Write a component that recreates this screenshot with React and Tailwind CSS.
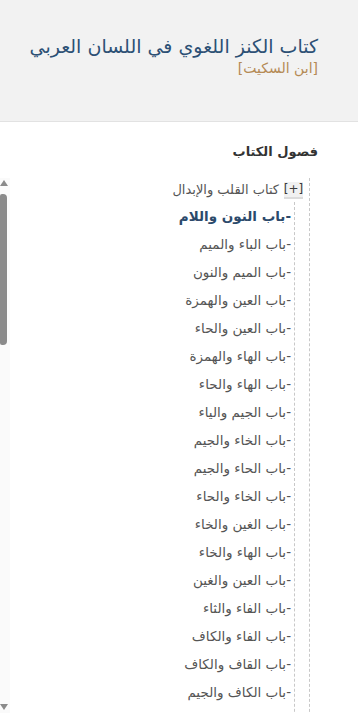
import React from 'react';

const chapters = [
  'باب النون واللام',
  'باب الباء والميم',
  'باب الميم والنون',
  'باب العين والهمزة',
  'باب العين والحاء',
  'باب الهاء والهمزة',
  'باب الهاء والحاء',
  'باب الجيم والياء',
  'باب الخاء والجيم',
  'باب الحاء والجيم',
  'باب الخاء والحاء',
  'باب الغين والخاء',
  'باب الهاء والخاء',
  'باب العين والغين',
  'باب الفاء والثاء',
  'باب الفاء والكاف',
  'باب القاف والكاف',
  'باب الكاف والجيم',
  'باب السين والشين',
  'باب الصاد والسين',
];

function Toggle() {
  return (
    <span className="inline-flex items-center justify-center w-[19px] h-[17px] bg-[#f1f1f1] border-b-2 border-[#dcdcdc] text-[12px] leading-none text-[#3b3b3b]" dir="ltr">
      [+]
    </span>
  );
}

// the scrollbar of the chapter list (drawn, the headless page hides native ones)
function ScrollBar() {
  return (
    <div className="w-[10px] shrink-0 bg-[#fafafa] flex flex-col items-start" dir="ltr">
      <div className="mt-[2px] h-0 w-0 border-x-[4px] border-b-[6px] border-x-transparent border-b-[#8a8a8a]" />
      <div className="mt-[8px] h-[151px] w-[7px] rounded-r-[4px] rounded-l-[2px] bg-[#8a8a8a]" />
      <div className="flex-1" />
      <div className="mb-[3px] h-0 w-0 border-x-[4px] border-t-[6px] border-x-transparent border-t-[#8a8a8a]" />
    </div>
  );
}

export default function App() {
  return (
    <div dir="rtl" className="min-h-screen bg-white font-['DejaVu_Sans',sans-serif]">
      <header className="h-[122px] bg-[#f2f2f2] border-b border-[#e2e2e2] pr-10 pt-[32px]">
        <h1 className="text-[19px] leading-[28px] text-[#2c5075]">كتاب الكنز اللغوي في اللسان العربي</h1>
        <p className="text-[14px] leading-[16px] text-[#b58a55]">[ابن السكيت]</p>
      </header>

      <section className="pr-10 pt-[20px]">
        <h2 className="text-[13px] leading-[20px] font-bold text-[#333]">فصول الكتاب</h2>

        <div className="mt-[16px] h-[535px] flex overflow-hidden">
          <div className="flex-1 pr-[8px]">
            <ul className="border-r border-dashed border-[#c8c8c8]">
              <li className="pr-[6px]">
                <div className="flex items-center gap-[5px] h-[22px] pt-[2px]">
                  <Toggle />
                  <span className="text-[13px] text-[#555]">كتاب القلب والإبدال</span>
                </div>
                <ul className="mr-[8px] mt-[2px] border-r border-dashed border-[#c8c8c8]">
                  {chapters.map((c, i) => (
                    <li
                      key={c}
                      className={`pr-[3px] text-[13.5px] leading-[28px] ${i === 0 ? 'font-bold text-[#2c4a6b]' : 'text-[#555]'}`}
                    >
                      -{c}
                    </li>
                  ))}
                </ul>
              </li>
            </ul>
          </div>
          <ScrollBar />
        </div>
      </section>
    </div>
  );
}
